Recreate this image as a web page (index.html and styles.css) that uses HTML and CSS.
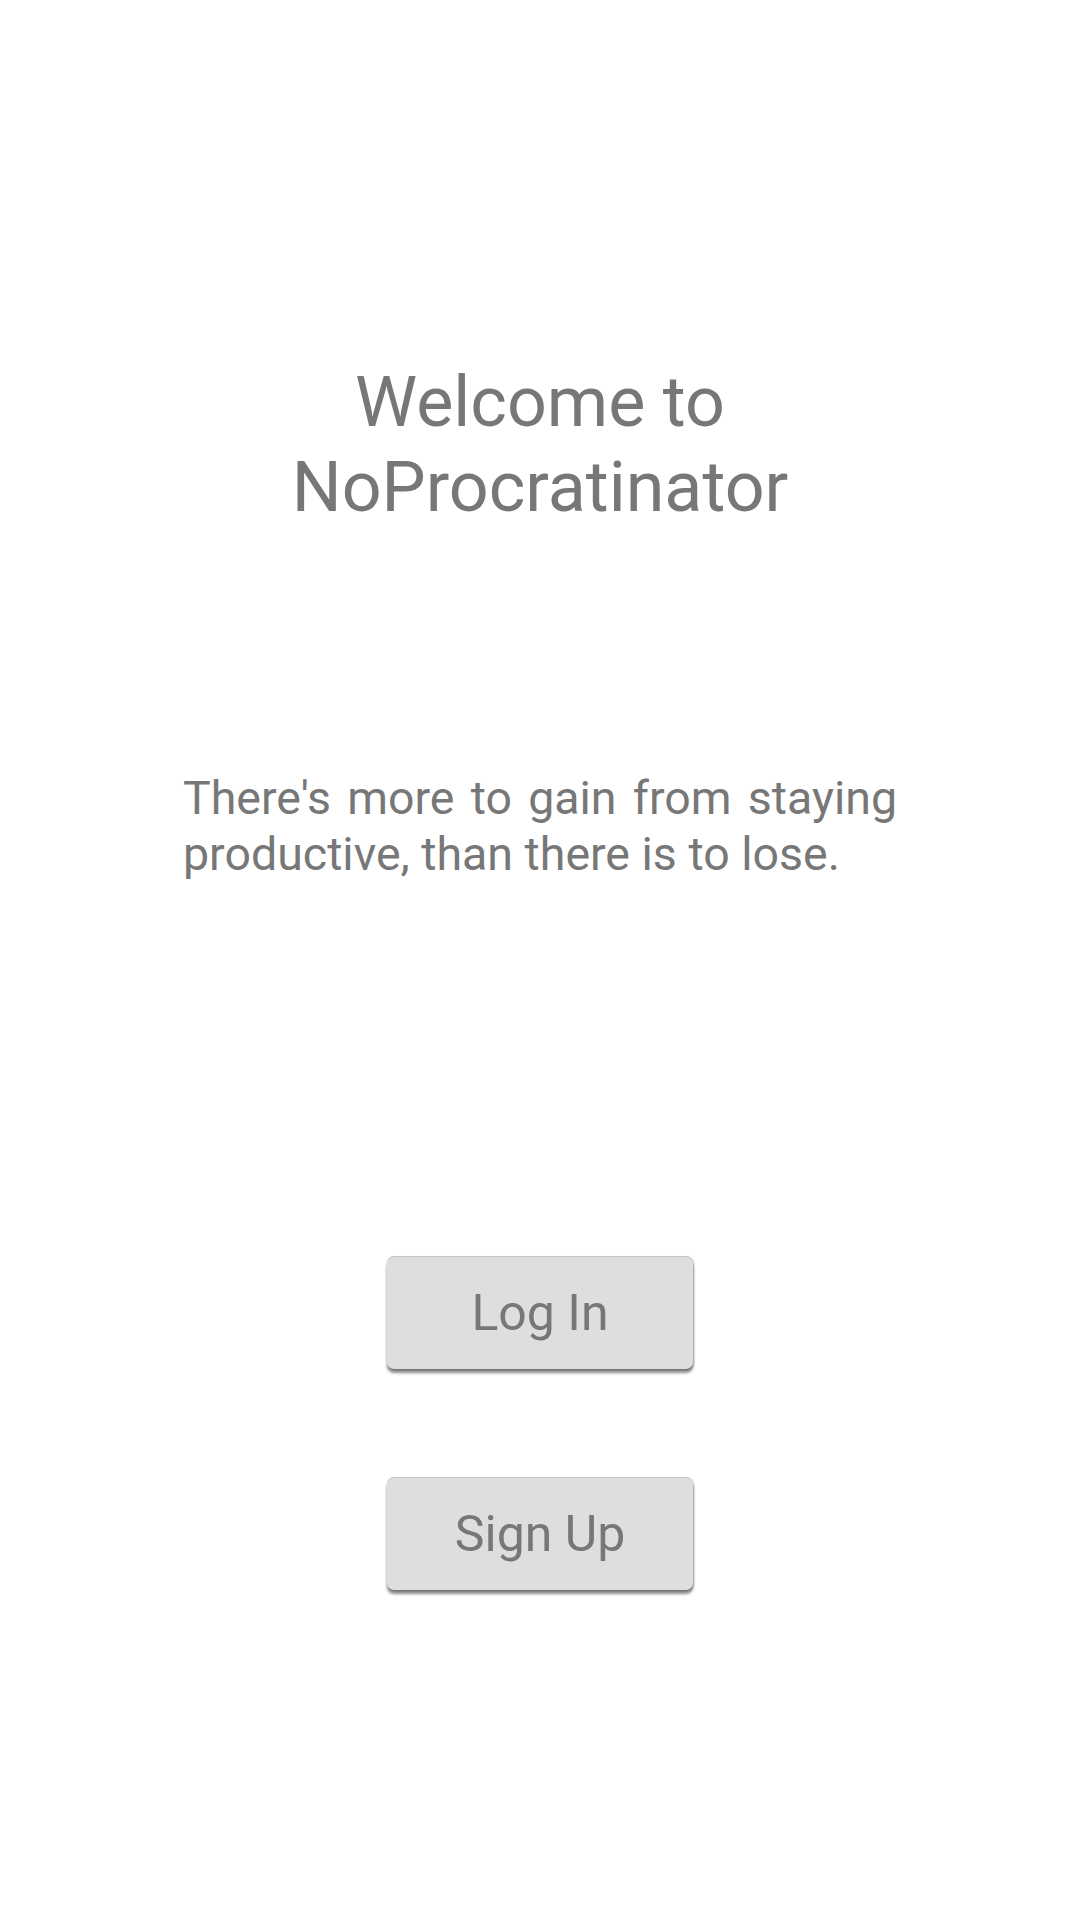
FILE: index.html
```html
<!DOCTYPE html>
<html lang="en">
<head>
<meta charset="utf-8">
<title>NoProcratinator</title>
<link rel="stylesheet" href="styles.css">
</head>
<body>
<main class="screen">
  <h1 class="title">Welcome to<br>NoProcratinator</h1>
  <p class="tagline">There's more to gain from staying productive, than there is to lose.</p>
  <div class="actions">
    <button class="btn" type="button">Log In</button>
    <button class="btn" type="button">Sign Up</button>
  </div>
</main>
</body>
</html>
```
FILE: styles.css
```css
html, body {
  margin: 0;
  padding: 0;
  background: #ffffff;
}
body {
  width: 1080px;
  height: 1920px;
  overflow: hidden;
  font-family: Roboto, "Liberation Sans", sans-serif;
  color: #777777;
}
.screen {
  display: flex;
  flex-direction: column;
  align-items: center;
  padding-top: 360px;
}
.title {
  margin: 0;
  font-size: 70px;
  font-weight: 400;
  line-height: 85px;
  text-align: center;
}
.tagline {
  box-sizing: border-box;
  width: 100%;
  margin: 240px 0 0;
  padding: 0 183px;
  font-size: 46.5px;
  line-height: 56px;
  text-align: justify;
}
.actions {
  display: flex;
  flex-direction: column;
  align-items: center;
  gap: 108px;
  margin-top: 374px;
}
.btn {
  width: 306px;
  height: 113px;
  padding: 0;
  border: none;
  border-top: 1px solid #c4c4c4;
  border-radius: 7px;
  background: #dedede;
  color: #777777;
  font-family: Roboto, "Liberation Sans", sans-serif;
  font-size: 50px;
  line-height: 63px;
  box-shadow: 0 4px 3px rgba(0, 0, 0, 0.45), 1px 1px 2px rgba(0, 0, 0, 0.25);
}
```
